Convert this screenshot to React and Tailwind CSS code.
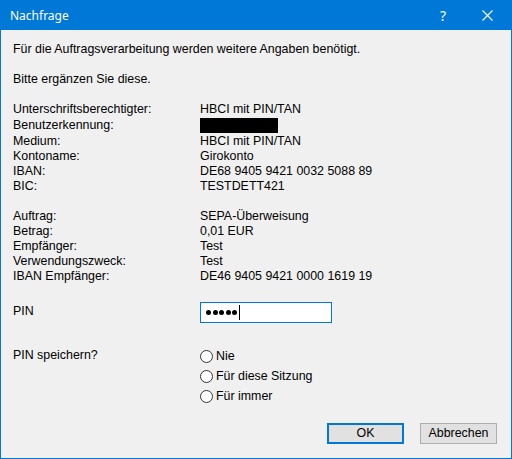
import React from "react";

const groupOne = [
  ["Unterschriftsberechtigter:", "HBCI mit PIN/TAN", "h-[16px]"],
  ["Benutzerkennung:", null, "h-[16px]"],
  ["Medium:", "HBCI mit PIN/TAN", "h-[15px]"],
  ["Kontoname:", "Girokonto", "h-[15px]"],
  ["IBAN:", "DE68 9405 9421 0032 5088 89", "h-[15px]"],
  ["BIC:", "TESTDETT421", "h-[15px]"],
];

const groupTwo = [
  ["Auftrag:", "SEPA-Überweisung"],
  ["Betrag:", "0,01 EUR"],
  ["Empfänger:", "Test"],
  ["Verwendungszweck:", "Test"],
  ["IBAN Empfänger:", "DE46 9405 9421 0000 1619 19"],
];

const Row = ({ label, value, h = "h-[15px]" }) => (
  <div className={`flex ${h} leading-[15px]`}>
    <div className="w-[187px] shrink-0">{label}</div>
    {value === null ? (
      <div className="w-[78px] h-[15px] bg-black" />
    ) : (
      <div>{value}</div>
    )}
  </div>
);

const Radio = ({ label }) => (
  <div className="flex items-center h-[20px] gap-[3px]">
    <span className="w-[13px] h-[13px] rounded-full border border-[#333] bg-white" />
    <span className="leading-[15px]">{label}</span>
  </div>
);

export default function App() {
  return (
    <div className="w-[512px] h-[459px] border border-[#0078d7] bg-[#f0f0f0] flex flex-col text-[12.4px] text-black font-['Liberation_Sans',Arial,sans-serif]">
      {/* Title bar */}
      <div className="h-[29px] bg-[#0078d7] flex items-center text-white shrink-0">
        <div className="pl-[9px] text-[12px] font-['Noto_Sans',sans-serif] flex-1">Nachfrage</div>
        <div className="w-[46px] pl-[4px] text-center text-[14px] font-['Noto_Sans',sans-serif]">?</div>
        <div className="w-[46px] flex justify-center mr-[1px]">
          <svg width="11" height="11" viewBox="0 0 11 11" stroke="white" strokeWidth="1.1">
            <path d="M0.5 0.5 L10.5 10.5 M10.5 0.5 L0.5 10.5" />
          </svg>
        </div>
      </div>

      {/* Body */}
      <div className="flex-1 flex flex-col pl-[12px] pr-[14px] pt-[12px]">
        <div className="leading-[15px]">Für die Auftragsverarbeitung werden weitere Angaben benötigt.</div>
        <div className="leading-[15px] mt-[15px]">Bitte ergänzen Sie diese.</div>

        <div className="mt-[15px]">
          {groupOne.map(([l, v, h]) => (
            <Row key={l} label={l} value={v} h={h} />
          ))}
        </div>

        <div className="mt-[15px]">
          {groupTwo.map(([l, v]) => (
            <Row key={l} label={l} value={v} />
          ))}
        </div>

        {/* PIN */}
        <div className="flex mt-[18px] h-[21px]">
          <div className="w-[187px] shrink-0 pt-[2px] leading-[15px]">PIN</div>
          <div className="w-[132px] h-[21px] border border-[#0078d7] bg-white flex items-center pl-[5px]">
            <div className="flex gap-[1.5px]">
              {[0, 1, 2, 3, 4].map((i) => (
                <span key={i} className="w-[5px] h-[5px] rounded-full bg-black" />
              ))}
            </div>
            <span className="ml-[2px] w-[1px] h-[15px] bg-black" />
          </div>
        </div>

        {/* PIN speichern */}
        <div className="flex mt-[23px]">
          <div className="w-[187px] shrink-0 pt-[2px] leading-[15px]">PIN speichern?</div>
          <div className="flex flex-col">
            <Radio label="Nie" />
            <Radio label="Für diese Sitzung" />
            <Radio label="Für immer" />
          </div>
        </div>

        {/* Buttons */}
        <div className="flex justify-end gap-[16px] mt-[17px]">
          <button className="w-[77px] h-[21px] bg-[#e1e1e1] border-2 border-[#0078d7] leading-[15px]">OK</button>
          <button className="w-[77px] h-[21px] bg-[#e1e1e1] border border-[#adadad] leading-[15px]">Abbrechen</button>
        </div>
      </div>
    </div>
  );
}
